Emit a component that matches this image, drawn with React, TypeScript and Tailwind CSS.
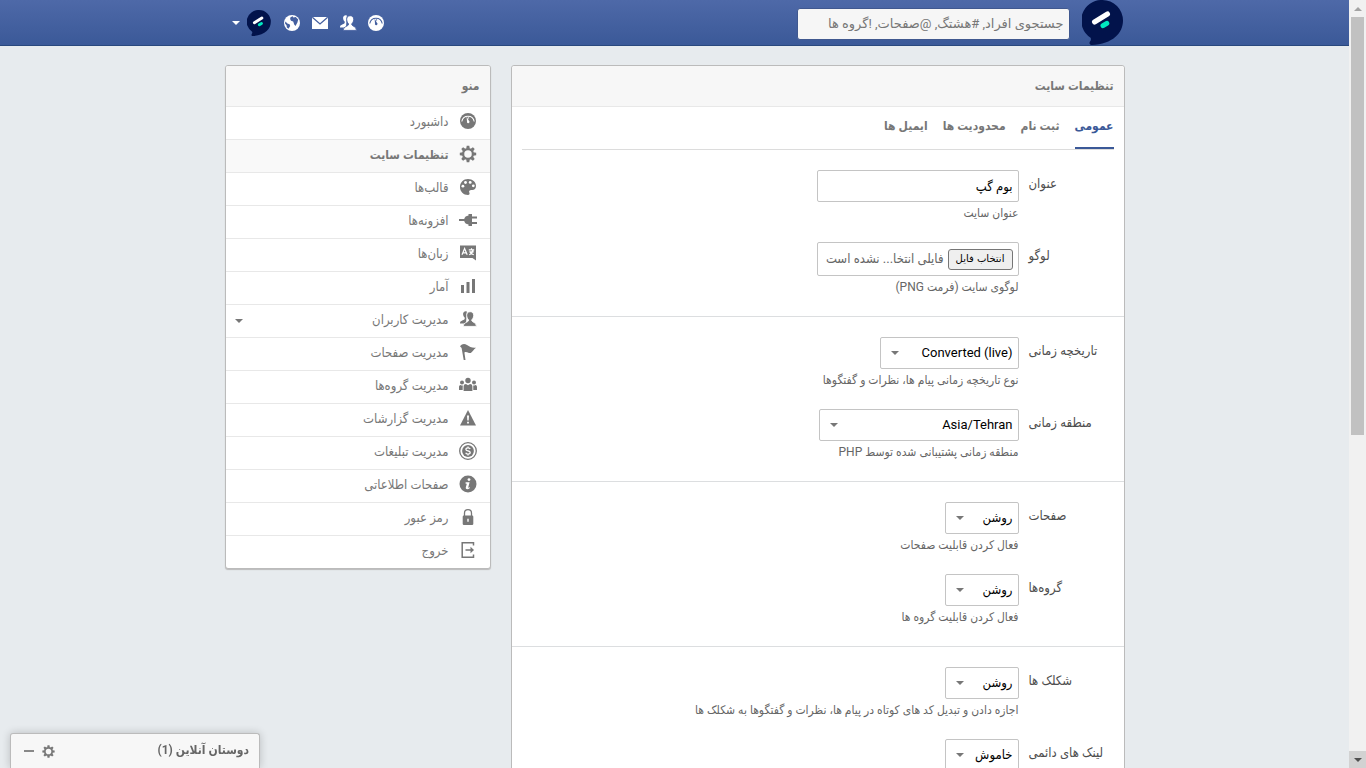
import { useRef, useState } from "react";
import type { ReactNode } from "react";

type IconProps = { className?: string; hole?: string };

function Svg({ className = "size-5", children }: { className?: string; children: ReactNode }) {
  return (
    <svg viewBox="0 0 20 20" fill="currentColor" className={`shrink-0 ${className}`} aria-hidden="true">
      {children}
    </svg>
  );
}

const DashboardIcon = ({ className, hole = "#fff" }: IconProps) => (
  <Svg className={className}>
    <circle cx="10" cy="10" r="8" />
    <path d="M3.800 10.500a6.300 6.300 0 0 1 12.400 0" fill="none" stroke={hole} strokeWidth="1.100" />
    <path d="M8.600 5.600l2.300 4.200a1.300 1.300 0 1 1-1.900.6z" fill={hole} />
    <path d="M10.600 5.800v2" stroke={hole} strokeWidth=".7" />
  </Svg>
);

const GearIcon = ({ className }: IconProps) => (
  <Svg className={className}>
    <circle cx="10" cy="10" r="4.900" fill="none" stroke="currentColor" strokeWidth="2.300" />
    {[0, 45, 90, 135, 180, 225, 270, 315].map((angle) => (
      <path key={angle} d="M8.200 4.800L8.700 1.800h2.600l.5 3z" transform={`rotate(${angle} 10 10)`} />
    ))}
  </Svg>
);

const PaletteIcon = ({ hole = "#fff" }: IconProps) => (
  <Svg>
    <path d="M10 2c4.600 0 8 3 8 6.900 0 2.800-1.800 4.300-4.200 4.100-2.200-.200-3.200.900-2.500 2.500.700 1.500.100 2.500-1.300 2.500-4.500 0-8-3.500-8-8s3.500-8 8-8z" />
    <circle cx="4.900" cy="9.200" r="1.400" fill={hole} />
    <circle cx="7.500" cy="5.500" r="1.400" fill={hole} />
    <circle cx="12.200" cy="5.400" r="1.400" fill={hole} />
    <circle cx="15.300" cy="8.800" r="1.400" fill={hole} />
  </Svg>
);

const PlugIcon = () => (
  <Svg>
    <path d="M1 9h5.200C6.600 7 8.300 5.800 10.500 5.500V4H14v2.500h5v2h-5v3.400h5v2h-5V16h-3.500v-1.500c-2.200-.3-3.900-1.500-4.300-3.500H1z" />
  </Svg>
);

const LanguageIcon = ({ hole = "#fff" }: IconProps) => (
  <Svg>
    <path d="M2 2.500h16v15L14.500 15H2z" />
    <path
      d="M4 11.800L6.600 5.500l2.600 6.300M5 9.800h3.200M10.800 6.800h5.400M13.500 5.200v1.600M11.300 8.800h4.400M15 7.200c-.3 2-1.500 3.700-3.800 4.600M12.100 8.900c.6 1.400 1.800 2.300 3.700 2.900"
      fill="none"
      stroke={hole}
      strokeWidth="1.200"
    />
  </Svg>
);

const ChartIcon = () => (
  <Svg>
    <path d="M3 9h3v8H3zM8.500 6h3v11h-3zM14 3h3v14h-3z" />
  </Svg>
);

const UsersIcon = ({ className, hole = "#fff" }: IconProps) => (
  <Svg className={className}>
    <path d="M8.800 2.400c-2.200-.7-3.900.8-3.700 2.900.1 1.500.8 2.700 1.600 3.300v1.300c-.5.900-3.300 1.600-4.200 2.600-.5.500-.5 1.200-.5 2h6z" />
    <path
      d="M12.200 2.700c2.400 0 3.700 1.600 3.500 3.900-.1 1.900-.9 3.400-1.900 4.200v1c.5 1.300 4.700 1.900 4.700 5.600H5.100c0-3.700 4.900-4.300 5.400-5.600v-1c-1-.8-1.700-2.300-1.800-4.200-.2-2.300 1.100-3.900 3.500-3.900z"
      stroke={hole}
      strokeWidth=".9"
    />
  </Svg>
);

const FlagIcon = () => (
  <Svg>
    <path d="M2 4.300C4.200 1.700 6.500 1.400 9 3.100c2.700 1.900 5.200 3.100 9 2.600-2.400 1.300-3.200 4.100-5.200 5.200-2.200 1-3.700-1.900-6.400-.4L7.500 18H5.700L3.600 6z" />
  </Svg>
);

const GroupIcon = () => (
  <Svg>
    <circle cx="10" cy="5.500" r="2.700" />
    <circle cx="4" cy="7.400" r="2" />
    <circle cx="16" cy="7.400" r="2" />
    <path d="M5.600 16v-4.500C5.600 9.800 6.700 9 8 9l2 1.300L12 9c1.300 0 2.400.8 2.400 2.500V16zM1 15v-3.100c0-1.300.7-2 1.800-2l1.200.8.900-.4c-.3 1.500-.1 2.600-.2 4.700zM19 15v-3.100c0-1.300-.7-2-1.800-2l-1.200.8-.9-.4c.3 1.500.1 2.600.2 4.700z" />
  </Svg>
);

const WarningIcon = ({ hole = "#fff" }: IconProps) => (
  <Svg>
    <path d="M10 2l8 15.500H2z" />
    <path d="M9 7.500h2l-.3 5H9.300zM9.100 13.700h1.800v1.700H9.100z" fill={hole} />
  </Svg>
);

const CoinIcon = ({ hole = "#fff" }: IconProps) => (
  <Svg>
    <circle cx="10" cy="10" r="8.300" fill="none" stroke="currentColor" strokeWidth="1.300" />
    <circle cx="10" cy="10" r="5.900" />
    <path
      d="M12.200 8.100c-.3-.8-1.100-1.200-2.200-1.200-1.200 0-2.100.5-2.100 1.500 0 2.200 4.300.9 4.300 3.200 0 1-.9 1.500-2.200 1.500-1.200 0-2-.5-2.300-1.300M10 5.600v1.300M10 13.100v1.300"
      fill="none"
      stroke={hole}
      strokeWidth="1.300"
    />
  </Svg>
);

const InfoIcon = ({ hole = "#fff" }: IconProps) => (
  <Svg>
    <circle cx="10" cy="10" r="8.500" />
    <circle cx="11" cy="5.600" r="1.400" fill={hole} />
    <path d="M7.600 8.300h4l-1.400 5.100c-.1.600.5.500 1.500-.3v1.100c-2 1.500-4.400 1.300-3.900-.9l1-3.600H7.600z" fill={hole} />
  </Svg>
);

const LockIcon = ({ hole = "#fff" }: IconProps) => (
  <Svg>
    <path d="M6.500 9V6.200C6.500 4 7.900 2.700 10 2.700s3.500 1.300 3.500 3.500V9" fill="none" stroke="currentColor" strokeWidth="1.300" />
    <rect x="4.700" y="8.500" width="10.600" height="9.500" rx="1.200" />
    <path d="M9.300 11.700h1.400v3.100H9.300z" fill={hole} />
  </Svg>
);

const LogoutIcon = () => (
  <Svg>
    <path d="M15.500 5.500V2.700H4.200v14.600h11.300v-2.800" fill="none" stroke="currentColor" strokeWidth="1.500" />
    <path d="M7.500 9.200h5V6.800L16 10l-3.500 3.200v-2.400h-5z" />
  </Svg>
);

const MailIcon = ({ className, hole }: IconProps) => (
  <Svg className={className}>
    <path d="M2 4h16v12H2z" />
    <path d="M2.300 4.300L10 11l7.700-6.700" fill="none" stroke={hole} strokeWidth="1.300" />
  </Svg>
);

const GlobeIcon = ({ className, hole }: IconProps) => (
  <Svg className={className}>
    <circle cx="10" cy="10" r="8" />
    <path
      d="M8.500 4.200l2.200-.9.700 1.300 2.300-.6 2.500 2.500-.8 2.900-1.900 3.600-1.300-1.500-1-3-2.200-.7-.9-1.900zM3.400 8.400l2 2.200 2.200.6.600 1.900-1.700 2.700-1.600-1.200-.4-2.300-1.500-1.800z"
      fill={hole}
    />
  </Svg>
);

function Logo({ className }: { className: string }) {
  return (
    <svg viewBox="0 0 41 45" className={`shrink-0 ${className}`} aria-hidden="true">
      <path d="M20.500 0A20.500 20.500 0 0 1 41 20.500C41 33 31 44 9.500 45c-2 0-2.500-2-1.500-3.500 1-1.300 1.200-2.500.6-3.800A20.500 20.500 0 0 1 20.500 0z" fill="#02134b" />
      <path d="M12.500 22L25.500 14" stroke="#fff" strokeWidth="5" strokeLinecap="round" />
      <path d="M21 25.700l3.800-2.300" stroke="#00e8c0" strokeWidth="5" strokeLinecap="round" />
    </svg>
  );
}

function Caret({ className = "" }: { className?: string }) {
  return (
    <svg viewBox="0 0 8 4" fill="currentColor" className={`h-1 w-2 shrink-0 ${className}`} aria-hidden="true">
      <path d="M0 0h8L4 4z" />
    </svg>
  );
}

const menuItems = [
  { label: "داشبورد", Icon: DashboardIcon },
  { label: "تنظیمات سایت", Icon: GearIcon, active: true },
  { label: "قالب‌ها", Icon: PaletteIcon },
  { label: "افزونه‌ها", Icon: PlugIcon },
  { label: "زبان‌ها", Icon: LanguageIcon },
  { label: "آمار", Icon: ChartIcon },
  { label: "مدیریت کاربران", Icon: UsersIcon, dropdown: true },
  { label: "مدیریت صفحات", Icon: FlagIcon },
  { label: "مدیریت گروه‌ها", Icon: GroupIcon },
  { label: "مدیریت گزارشات", Icon: WarningIcon },
  { label: "مدیریت تبلیغات", Icon: CoinIcon },
  { label: "صفحات اطلاعاتی", Icon: InfoIcon },
  { label: "رمز عبور", Icon: LockIcon },
  { label: "خروج", Icon: LogoutIcon },
];

const tabs = ["عمومی", "ثبت نام", "محدودیت ها", "ایمیل ها"];

function Field({ id, label, help, children }: { id: string; label: string; help: string; children: ReactNode }) {
  return (
    <div className="mb-5 flex items-start gap-2.5">
      <label htmlFor={id} className="w-[85px] shrink-0 whitespace-nowrap text-left leading-7 text-[#4d4d4d]">
        {label}
      </label>
      <div className="min-w-0 flex-1">
        {children}
        <p className="h-5 text-xs leading-[22px] text-[#666]">{help}</p>
      </div>
    </div>
  );
}

type SelectFieldProps = { id: string; label: string; help: string; options: string[]; width: string };

function SelectField({ id, label, help, options, width }: SelectFieldProps) {
  return (
    <Field id={id} label={label} help={help}>
      <div className={`relative ${width}`}>
        <select
          id={id}
          className="block h-8 w-full appearance-none rounded-xs border border-[#c4c4c4] bg-white pr-[5px] pl-5 text-black outline-none"
        >
          {options.map((o) => (
            <option key={o}>{o}</option>
          ))}
        </select>
        <Caret className="pointer-events-none absolute top-3.5 left-[11px] text-[#777]" />
      </div>
    </Field>
  );
}

function FileField() {
  const fileRef = useRef<HTMLInputElement>(null);
  return (
    <Field id="logo" label="لوگو" help="لوگوی سایت (فرمت PNG)">
      <div className="flex h-[34px] w-[202px] items-center gap-1 rounded-xs border border-[#c4c4c4] bg-white px-[5px]">
        <input ref={fileRef} id="logo" type="file" className="sr-only" />
        <button
          type="button"
          onClick={() => fileRef.current?.click()}
          className="h-[21px] w-[65px] shrink-0 whitespace-nowrap rounded-[3px] border border-[#767676] bg-[#efefef] font-['DejaVu_Sans',sans-serif] text-[10px] leading-4 text-black"
        >
          انتخاب فایل
        </button>
        <span className="whitespace-nowrap text-[#666]">فایلی انتخا... نشده است</span>
      </div>
    </Field>
  );
}

function Section({ children }: { children: ReactNode }) {
  return <section className="border-b border-[#dcdee0] px-2.5 pt-5 last:border-b-0">{children}</section>;
}

function Header() {
  return (
    <header className="h-[46px] border-b border-[#29487d] bg-linear-to-b from-[#4e69a8] to-[#3b5998]">
      <div className="mx-auto flex h-[45px] w-full max-w-[900px] items-center">
        <a href="#home" aria-label="بوم گپ" className="mr-0.5">
          <Logo className="h-[45px] w-[41px]" />
        </a>
        <input
          type="search"
          aria-label="جستجو"
          placeholder="جستجوی افراد, #هشتگ, @صفحات, !گروه ها"
          className="mt-0.5 mr-3 h-8 w-[273px] rounded-[3px] border border-[#40588f] bg-[#f6f6f6] px-[5px] font-[Roboto,'DejaVu_Sans',sans-serif] outline-none placeholder:text-[#777]"
        />
        <nav className="mr-auto flex items-center text-white">
          <a href="#dashboard" aria-label="داشبورد" className="px-1">
            <DashboardIcon hole="#4560a0" />
          </a>
          <a href="#users" aria-label="کاربران" className="px-1">
            <UsersIcon hole="#4560a0" />
          </a>
          <a href="#messages" aria-label="پیام ها" className="px-1">
            <MailIcon hole="#4560a0" />
          </a>
          <a href="#notifications" aria-label="اعلان ها" className="px-1">
            <GlobeIcon hole="#4560a0" />
          </a>
          <button type="button" aria-label="حساب کاربری" className="mr-[7px] ml-[7px] flex items-center gap-[7px]">
            <Logo className="h-[26px] w-6" />
            <Caret />
          </button>
        </nav>
      </div>
    </header>
  );
}

function Sidebar() {
  return (
    <aside className="w-[266px] shrink-0 overflow-hidden rounded-[3px] border border-[#bbb] bg-white shadow-[0_1px_1px_#bbb]">
      <h2 className="h-10 bg-[#f7f7f7] px-2.5 text-xs leading-10 font-bold text-[#777]">منو</h2>
      <ul>
        {menuItems.map(({ label, Icon, active, dropdown }) => (
          <li key={label} className="border-t border-[#e8e8e8]">
            <a
              href="#menu"
              className={`flex h-8 items-center gap-[9px] pr-3 pl-[9px] text-[#777] ${
                active ? "bg-[#f9f9f9] text-xs font-bold" : ""
              }`}
            >
              <span className="pb-1">
                <Icon />
              </span>
              <span className="pb-0.5">{label}</span>
              {dropdown && <Caret className="mr-auto" />}
            </a>
          </li>
        ))}
      </ul>
    </aside>
  );
}

function Settings() {
  const [tab, setTab] = useState(0);
  return (
    <main className="min-w-0 flex-1 rounded-[3px] border border-[#bbb] bg-white">
      <h1 className="h-10 rounded-t-[3px] bg-[#f7f7f7] px-2.5 text-xs leading-10 font-bold text-[#777]">تنظیمات سایت</h1>
      <div className="border-t border-[#e8e8e8] px-2.5">
        <div role="tablist" className="flex gap-[15px] border-b border-[#dcdcdc]">
          {tabs.map((t, i) => (
            <button
              key={t}
              type="button"
              role="tab"
              aria-selected={tab === i}
              onClick={() => setTab(i)}
              className={`h-[42px] border-b-2 pb-0.5 text-xs font-bold ${
                tab === i ? "border-[#3b5998] text-[#3b5998]" : "border-transparent text-[#777]"
              }`}
            >
              {t}
            </button>
          ))}
        </div>
      </div>
      <form>
        <Section>
          <Field id="title" label="عنوان" help="عنوان سایت">
            <input
              id="title"
              type="text"
              defaultValue="بوم گپ"
              className="block h-8 w-[202px] rounded-xs border border-[#c4c4c4] bg-white px-[5px] text-black outline-none"
            />
          </Field>
          <FileField />
        </Section>
        <Section>
          <SelectField
            id="timeline"
            label="تاریخچه زمانی"
            help="نوع تاریخچه زمانی پیام ها، نظرات و گفتگوها"
            options={["Converted (live)", "Standard"]}
            width="w-[139px]"
          />
          <SelectField
            id="timezone"
            label="منطقه زمانی"
            help="منطقه زمانی پشتیبانی شده توسط PHP"
            options={["Asia/Tehran", "UTC"]}
            width="w-[200px]"
          />
        </Section>
        <Section>
          <SelectField id="pages" label="صفحات" help="فعال کردن قابلیت صفحات" options={["روشن", "خاموش"]} width="w-[74px]" />
          <SelectField id="groups" label="گروه‌ها" help="فعال کردن قابلیت گروه ها" options={["روشن", "خاموش"]} width="w-[74px]" />
        </Section>
        <Section>
          <SelectField
            id="smiles"
            label="شکلک ها"
            help="اجازه دادن و تبدیل کد های کوتاه در پیام ها، نظرات و گفتگوها به شکلک ها"
            options={["روشن", "خاموش"]}
            width="w-[74px]"
          />
          <SelectField id="permalinks" label="لینک های دائمی" help="" options={["خاموش", "روشن"]} width="w-[74px]" />
        </Section>
      </form>
    </main>
  );
}

function FriendsBar() {
  return (
    <div className="fixed bottom-0 left-2.5 flex h-[35px] w-[250px] items-center rounded-t-[3px] border border-b-0 border-[#bbb] bg-[#f7f7f7] px-2.5 text-[#777] shadow-[0_0_8px_rgba(0,0,0,0.2)]">
      <span className="pb-0.5 text-xs font-bold text-[#666]">دوستان آنلاین (1)</span>
      <button type="button" aria-label="تنظیمات" className="mr-auto">
        <GearIcon className="size-[15px]" />
      </button>
      <button type="button" aria-label="کوچک کردن" className="mr-[7px] ml-[3px] h-0.5 w-2.5 bg-[#888]" />
    </div>
  );
}

function Scrollbar() {
  return (
    <div aria-hidden="true" className="flex w-[17px] shrink-0 flex-col bg-[#f1f1f1]">
      <div className="flex h-[17px] items-center justify-center text-[#a3a3a3]">
        <Caret className="rotate-180" />
      </div>
      <div className="flex-1 px-0.5">
        <div className="h-[57%] bg-[#c1c1c1]" />
      </div>
      <div className="flex h-[17px] items-center justify-center bg-[#d2d2d2] text-[#505050]">
        <Caret />
      </div>
    </div>
  );
}

export default function App() {
  return (
    <div className="flex h-screen overflow-hidden bg-[#e7ebee] font-[Roboto,'DejaVu_Sans_Condensed','DejaVu_Sans',sans-serif] text-[13px]">
      <div dir="rtl" className="min-w-0 flex-1 overflow-hidden">
        <Header />
        <div className="mx-auto flex w-full max-w-[900px] items-start gap-5 pt-[19px]">
          <Settings />
          <Sidebar />
        </div>
        <FriendsBar />
      </div>
      <Scrollbar />
    </div>
  );
}
